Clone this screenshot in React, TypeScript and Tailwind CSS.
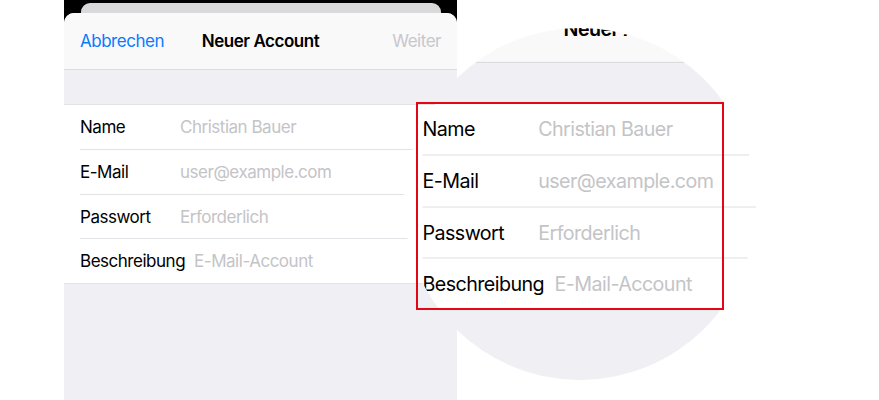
import React from "react";

const rows = [
  { label: "Name", value: "Christian Bauer", h: "h-[45px]" },
  { label: "E-Mail", value: "user@example.com", h: "h-[45px]" },
  { label: "Passwort", value: "Erforderlich", h: "h-[44px]" },
  { label: "Beschreibung", value: "E-Mail-Account", h: "h-[44px]" },
];

function AccountSheet() {
  return (
    <div className="flex h-[400px] w-[393px] flex-col bg-black">
      {/* card stacked behind the sheet */}
      <div className="flex h-[13px] justify-center pt-[3px]">
        <div className="w-[360px] rounded-t-[9px] bg-[#d9d9db]" />
      </div>

      <div className="flex flex-1 flex-col overflow-hidden rounded-t-[10px] bg-[#efeff4]">
        <div className="flex h-[57px] items-center border-b border-[#dcdce0] bg-[#f9f9f9] px-4 pt-[2px] text-[17px]">
          <span className="flex-1 text-[#0a7aff]">Abbrechen</span>
          <span className="font-semibold text-black">Neuer Account</span>
          <span className="flex-1 text-right text-[#c7c7cc]">Weiter</span>
        </div>

        <div className="h-[34px]" />

        <div className="border-y border-[#e3e3e7] bg-white pl-4">
          {rows.map((row, i) => (
            <div
              key={row.label}
              className={`flex items-center pt-[2px] text-[17px] ${row.h} ${
                i < rows.length - 1 ? "border-b border-[#e3e3e7]" : ""
              }`}
            >
              <span className="mr-[9px] min-w-[91px] text-black">{row.label}</span>
              <span className="text-[#c4c4c7]">{row.value}</span>
            </div>
          ))}
        </div>
      </div>
    </div>
  );
}

export default function App() {
  return (
    <div className="relative h-[400px] w-[879px] overflow-hidden bg-white pl-16 font-['Inter',sans-serif] tracking-[-0.03em]">
      <AccountSheet />

      {/* magnifier */}
      <div
        aria-hidden="true"
        className="absolute left-[404px] top-[28px] h-[352px] w-[352px] overflow-hidden rounded-full"
      >
        <div className="absolute left-[-0.5px] top-[-46.4px] origin-top-left scale-[1.157]">
          <AccountSheet />
        </div>
      </div>

      {/* highlight box */}
      <div className="absolute left-[416px] top-[102px] h-[208px] w-[308px] border-2 border-[#e30613]" />
    </div>
  );
}
